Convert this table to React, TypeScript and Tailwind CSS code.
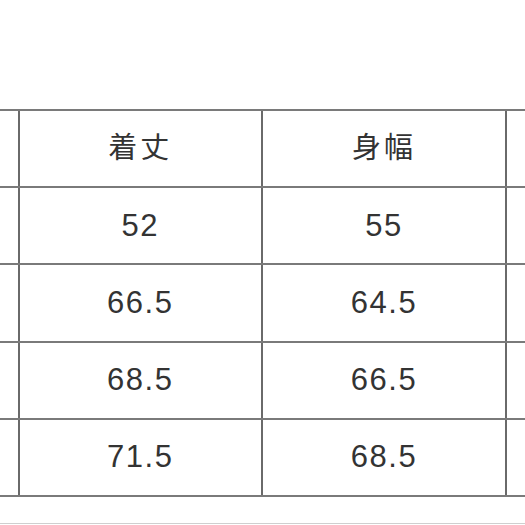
import React from "react";

const rows: [string, string][] = [
  ["着丈", "身幅"],
  ["52", "55"],
  ["66.5", "64.5"],
  ["68.5", "66.5"],
  ["71.5", "68.5"],
];

export default function App() {
  return (
    <div className="w-[525px] h-[525px] bg-white overflow-hidden relative" style={{ fontFamily: '"Liberation Sans", "Noto Sans CJK JP", sans-serif' }}>
      <div className="pt-[109px]">
        <div className="border-t-2 border-[#7a7a7a]">
          {rows.map((r, i) => (
            <div key={i} className="grid grid-cols-[19.5px_243.5px_244px_1fr] h-[77.2px] border-b-2 border-[#7a7a7a]">
              <div className="border-r-2 border-[#6a6a6a]" />
              <div className={`border-r-2 border-[#6a6a6a] flex items-center justify-center text-[#333] ${i === 0 ? "text-[29px] tracking-[3px]" : "text-[31px] tracking-[1.5px]"}`}>
                {r[0]}
              </div>
              <div className={`border-r-2 border-[#6a6a6a] flex items-center justify-center text-[#333] ${i === 0 ? "text-[29px] tracking-[3px]" : "text-[31px] tracking-[1.5px]"}`}>
                {r[1]}
              </div>
              <div />
            </div>
          ))}
        </div>
      </div>
      <div className="absolute left-0 right-0 bottom-[1px] h-px bg-[#cfcfcf]" />
    </div>
  );
}
